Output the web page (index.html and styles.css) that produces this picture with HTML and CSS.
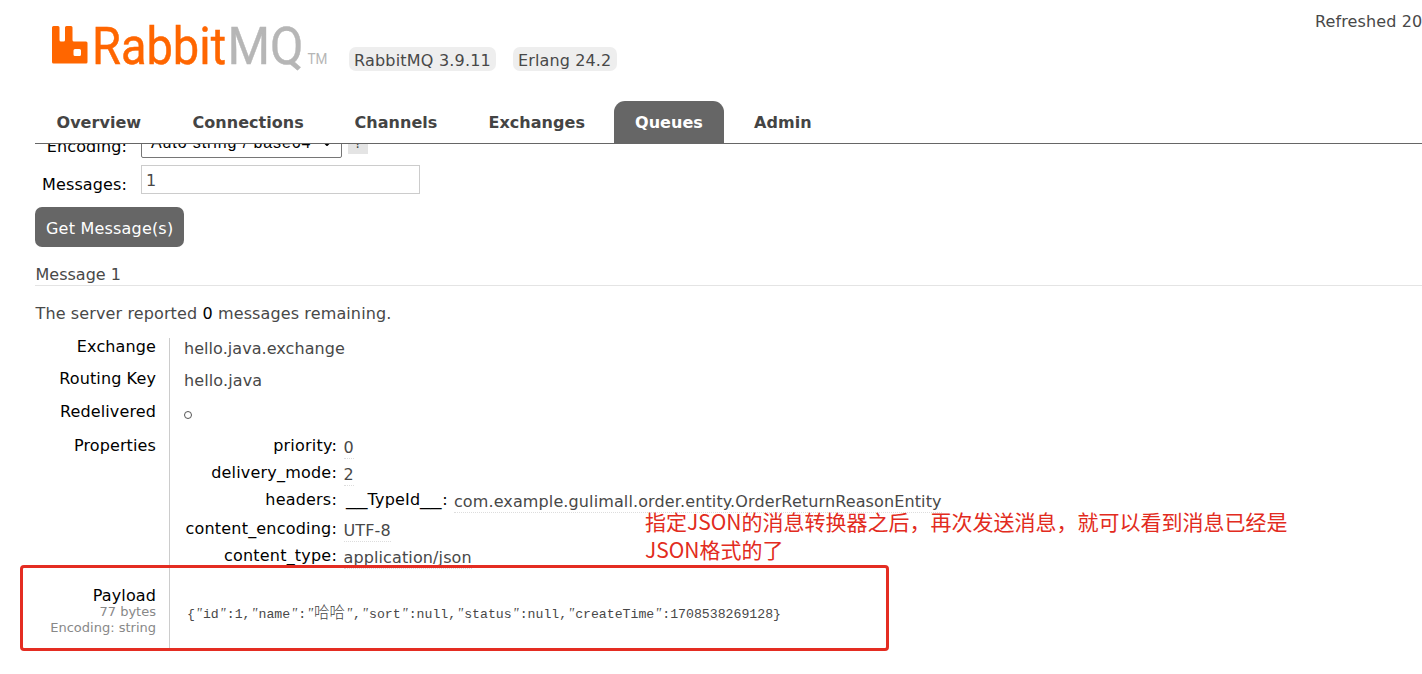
FILE: index.html
```html
<!DOCTYPE html>
<html lang="en">
<head>
<meta charset="utf-8">
<title>RabbitMQ Management</title>
<link rel="stylesheet" href="styles.css">
</head>
<body>
<header class="header">
  <div class="brand">
    <svg class="logo" width="290" height="60" viewBox="45 15 290 60">
      <path fill="#f60" d="M53.500 26h4.500q1.500 0 1.500 1.500v12.500q0 1.500 1.500 1.500h2.500q1.500 0 1.500-1.500v-12.500q0-1.500 1.500-1.500h4.500q1.500 0 1.500 1.500v12.500q0 1.500 1.500 1.500h12q1.500 0 1.500 1.500v19q0 1.500-1.500 1.500H53.500q-1.500 0-1.500-1.500V27.500q0-1.500 1.500-1.500zM75 49q-1.500 0-1.500 1.500v4q0 1.500 1.500 1.500h4.500q1.500 0 1.500-1.500v-4q0-1.500-1.500-1.500z"/>
      <text class="logo-text" x="92" y="63.500" fill="#f60" stroke="#f60" stroke-width=".5" textLength="134" lengthAdjust="spacingAndGlyphs">Rabbit</text>
      <text class="logo-text" x="227.500" y="63.500" fill="#b6b6b6" stroke="#b6b6b6" stroke-width=".4" textLength="76" lengthAdjust="spacingAndGlyphs">MQ</text>
      <text class="logo-tm" x="307.500" y="63.500" fill="#b6b6b6" textLength="20" lengthAdjust="spacingAndGlyphs">TM</text>
    </svg>
    <span class="version v1">RabbitMQ 3.9.11</span>
    <span class="version">Erlang 24.2</span>
  </div>
  <div class="refreshed">Refreshed 20</div>
</header>
<nav class="tabs">
  <a class="tab t1">Overview</a>
  <a class="tab t2">Connections</a>
  <a class="tab t3">Channels</a>
  <a class="tab t4">Exchanges</a>
  <a class="tab t5 selected">Queues</a>
  <a class="tab t6">Admin</a>
</nav>
<main class="main">
  <div class="form-row encoding">
    <span class="label">Encoding:</span>
    <div class="select"><span>Auto string / base64</span><svg width="10" height="6" viewBox="0 0 10 6"><path d="M1 1l4 4 4-4" fill="none" stroke="#000" stroke-width="2"/></svg></div>
    <span class="help">?</span>
  </div>
  <div class="form-row messages">
    <span class="label">Messages:</span>
    <div class="input">1</div>
  </div>
  <div class="button">Get Message(s)</div>
  <h3 class="title">Message 1</h3>
  <p class="remaining">The server reported <b>0</b> messages remaining.</p>
  <section class="facts">
    <div class="names">
      <span class="n-exchange">Exchange</span>
      <span class="n-key">Routing Key</span>
      <span class="n-red">Redelivered</span>
      <span class="n-prop">Properties</span>
      <div class="payload-name">
        <span>Payload</span>
        <small>77 bytes</small>
        <small>Encoding: string</small>
      </div>
    </div>
    <div class="values">
      <span class="v-exchange">hello.java.exchange</span>
      <span class="v-key">hello.java</span>
      <span class="circle"></span>
      <div class="props">
        <span class="pn">priority:</span><span class="pv"><abbr>0</abbr></span>
        <span class="pn">delivery_mode:</span><span class="pv"><abbr>2</abbr></span>
        <span class="pn">headers:</span><div class="nested"><span class="pn"><span class="wide">__</span>TypeId<span class="wide">__</span>:</span><span class="pv"><abbr>com.example.gulimall.order.entity.OrderReturnReasonEntity</abbr></span></div>
        <span class="pn">content_encoding:</span><span class="pv"><abbr>UTF-8</abbr></span>
        <span class="pn">content_type:</span><span class="pv"><abbr>application/json</abbr></span>
      </div>
      <pre class="payload">{<i>"</i>id<i>"</i>:1,<i>"</i>name<i>"</i>:<i>"</i><span class="cjk">哈哈</span><i>"</i>,<i>"</i>sort<i>"</i>:null,<i>"</i>status<i>"</i>:null,<i>"</i>createTime<i>"</i>:1708538269128}</pre>
    </div>
  </section>
</main>
<div class="note">指定JSON的消息转换器之后，再次发送消息，就可以看到消息已经是<br>JSON格式的了</div>
<div class="highlight"></div>
</body>
</html>
```
FILE: styles.css
```css
* { box-sizing: border-box; }
body {
  margin: 0;
  width: 1422px;
  height: 674px;
  overflow: hidden;
  position: relative;
  background: #fff;
  color: #484848;
  font: 16px/20px "DejaVu Sans", Verdana, sans-serif;
  letter-spacing: 0.12px;
  white-space: nowrap;
}
.header { display: flex; justify-content: space-between; height: 101px; }
.brand { display: flex; align-items: flex-start; padding: 15px 0 0 45px; }
.logo { display: block; width: 290px; height: 60px; flex: none; overflow: visible; letter-spacing: 0; }
.logo-text { font: 52px Roboto, sans-serif; }
.logo-tm { font: 14px Roboto, sans-serif; }
.version { height: 24px; margin-top: 32px; padding: 4px 5px 0; border-radius: 7px; background: #eee; width: 104px; }
.v1 { margin-left: 14px; margin-right: 17px; width: 147px; letter-spacing: 0.2px; }
.refreshed { width: 107px; padding-top: 12px; }

.tabs { display: flex; height: 43px; margin-left: 35px; border-bottom: 1px solid #666; }
.tab { height: 42px; padding: 12px 0 0 21.500px; font-weight: bold; color: #444; letter-spacing: 0.04px; }
.t1 { width: 136px; }
.t2 { width: 162px; }
.t3 { width: 134px; }
.t4 { width: 147px; }
.t5 { width: 110px; padding-left: 21px; }
.t6 { padding-left: 30px; }
.selected { background: #666; color: #fff; border-radius: 11px 11px 0 0; }

.main { height: 530px; padding-left: 35px; overflow: hidden; }
.form-row { display: flex; color: #000; }
.label { width: 92px; text-align: right; margin-right: 14px; }
.encoding { height: 14px; align-items: flex-end; }
.encoding .label { margin-bottom: 1px; }
.select { width: 201px; height: 28px; border: 1px solid #767676; border-radius: 0 0 2px 2px; display: flex; align-items: center; justify-content: space-between; padding: 0 9px 2px; font: 16px/20px "Liberation Sans", Arial, sans-serif; letter-spacing: 0.9px; }
.help { width: 20px; height: 24px; margin: 0 0 4px 6px; padding-top: 3px; background: #e4e4e4; color: #444; font-size: 14px; text-align: center; }
.messages { margin-top: 7px; height: 29px; }
.messages .label { padding-top: 10px; }
.input { width: 279px; height: 29px; border: 1px solid #ccc; padding: 5px 4px; color: #484848; }
.button { width: 149px; height: 40px; margin-top: 13px; padding: 12px 0 0 11px; border-radius: 7px; background: #666; color: #fff; letter-spacing: 0.2px; }
.title { height: 21px; margin: 18px 0 0; font: inherit; letter-spacing: 0; border-bottom: 1px solid #e4e4e4; padding-left: 0.500px; }
.remaining { margin: 18px 0 0; padding-left: 0.500px; }
.remaining b { font-weight: normal; color: #000; }
.facts { display: grid; grid-template-columns: 135px 1fr; height: 310px; margin-top: 14px; }
.names { display: flex; flex-direction: column; align-items: flex-end; padding-right: 13px; border-right: 1px solid #ccc; color: #000; }
.n-exchange { margin-top: -1px; }
.n-key { margin-top: 12px; }
.n-red { margin-top: 13px; }
.n-prop { margin-top: 14px; }
.payload-name { display: flex; flex-direction: column; align-items: flex-end; margin-top: 131px; }
.payload-name span { line-height: 17px; }
.payload-name small { font-size: 13px; line-height: 16px; color: #888; letter-spacing: 0; }
.values { display: flex; flex-direction: column; align-items: flex-start; padding: 1px 0 0 14px; }
.v-exchange { letter-spacing: 0.06px; }
.v-key { margin-top: 12px; }
.circle { width: 8px; height: 8px; margin: 20px 0 0; border: 1px solid #555; border-radius: 50%; }
.props { display: grid; grid-template-columns: 153px auto; column-gap: 6.500px; grid-template-rows: 27px 27px 29px 27px 22px; margin-top: 17px; }
.pn { text-align: right; color: #000; letter-spacing: 0.2px; }
.wide { display: inline-block; width: 22px; text-align: left; letter-spacing: 0; transform: scaleX(1.34); transform-origin: 0 0; }
.pv { padding-top: 2px; }
.pv abbr { display: inline-block; height: 21px; border-bottom: 1px dotted #ddd; }
.nested { display: flex; gap: 6px; margin-left: 2px; }
.payload { margin: 35px 0 0 3px; font: 13.200px/20px "Liberation Mono", monospace; letter-spacing: 0; }
.payload i { font-family: "Liberation Serif", serif; font-size: 14px; line-height: 16px; display: inline-block; width: 8px; text-align: center; }
.cjk { font-family: "Noto Sans CJK SC", sans-serif; font-size: 15.500px; line-height: 16px; font-weight: 300; }

.note { position: absolute; left: 645px; top: 507px; font: 21px/28px "Noto Sans CJK SC", sans-serif; letter-spacing: 0; color: #e22b20; }
.highlight { position: absolute; left: 20px; top: 565px; width: 869px; height: 86px; border: 3px solid #e42d22; border-radius: 4px; }
```
